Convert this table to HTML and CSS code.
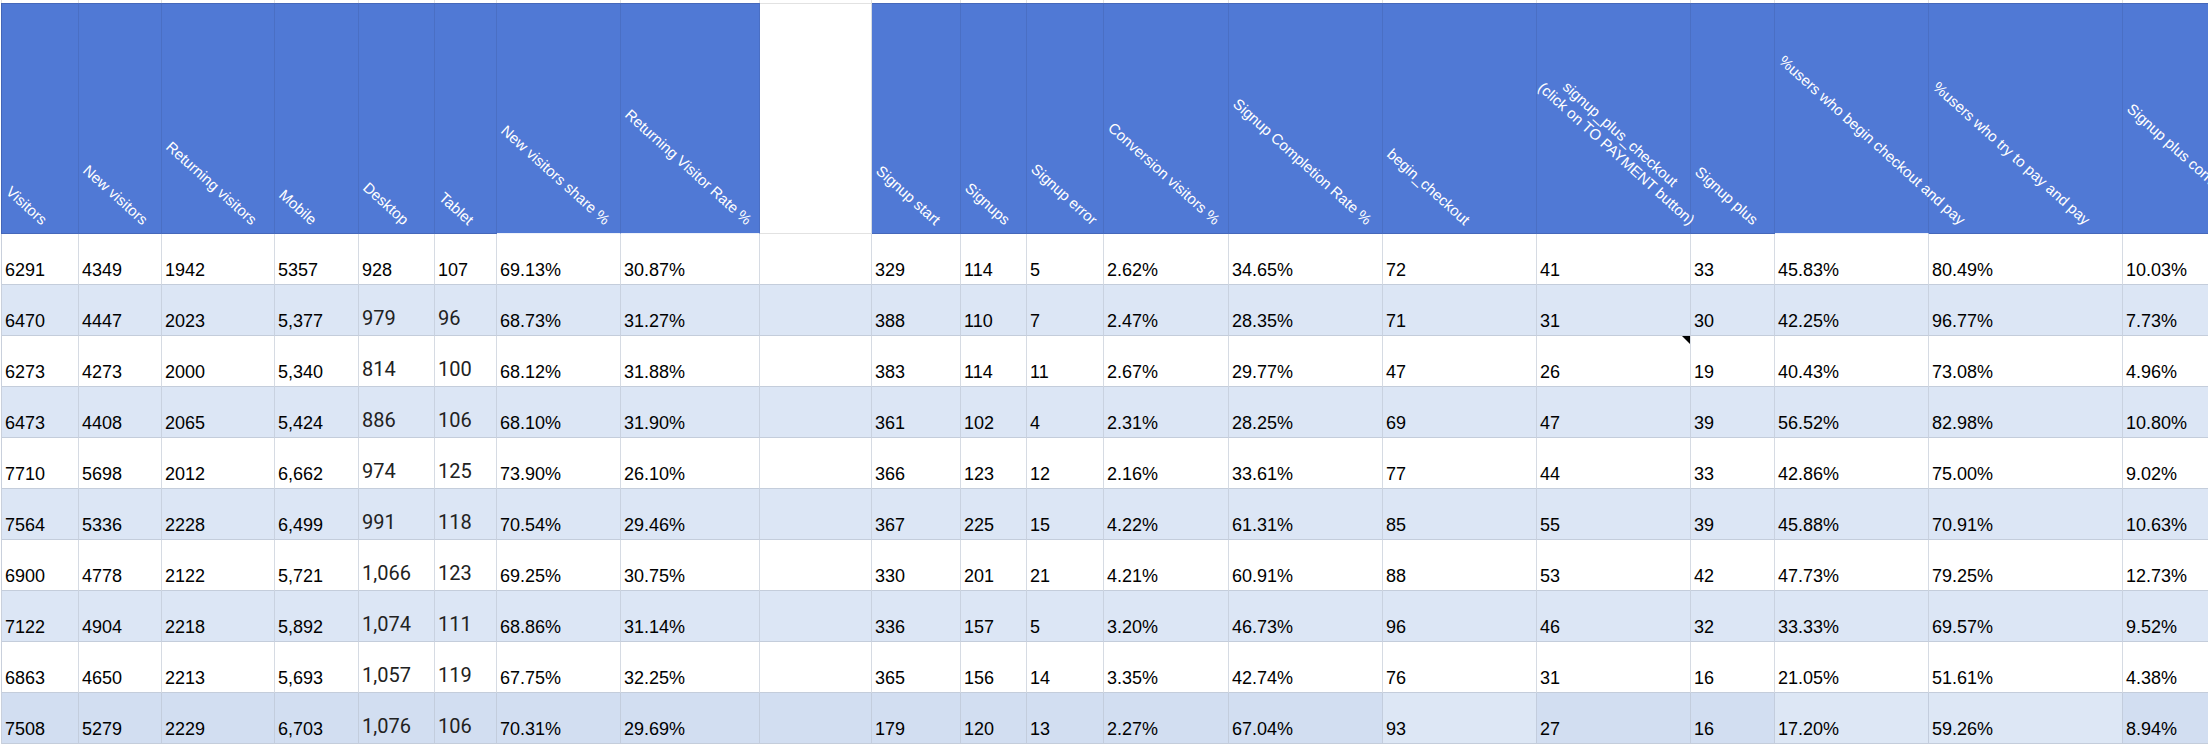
FILE: index.html
```html
<!DOCTYPE html>
<html lang="en">
<head>
<meta charset="utf-8">
<title>Funnel sheet</title>
<link rel="stylesheet" href="styles.css">
</head>
<body>
<div class="sheet">
  <div class="row top">
    <div class="c"></div><div class="c"></div><div class="c"></div><div class="c"></div><div class="c"></div><div class="c"></div><div class="c"></div><div class="c"></div><div class="c"></div><div class="c"></div><div class="c"></div><div class="c"></div><div class="c"></div><div class="c"></div><div class="c"></div><div class="c"></div><div class="c"></div><div class="c"></div><div class="c"></div><div class="c"></div>
  </div>
  <div class="row head">
    <div class="h"><span class="hl">Visitors</span></div>
    <div class="h"><span class="hl">New visitors</span></div>
    <div class="h"><span class="hl">Returning visitors</span></div>
    <div class="h"><span class="hl">Mobile</span></div>
    <div class="h"><span class="hl">Desktop</span></div>
    <div class="h"><span class="hl">Tablet</span></div>
    <div class="h lite"><span class="hl">New visitors share %</span></div>
    <div class="h lite"><span class="hl">Returning Visitor Rate %</span></div>
    <div class="h blank"></div>
    <div class="h"><span class="hl">Signup start</span></div>
    <div class="h"><span class="hl">Signups</span></div>
    <div class="h"><span class="hl">Signup error</span></div>
    <div class="h"><span class="hl">Conversion visitors %</span></div>
    <div class="h"><span class="hl">Signup Completion Rate %</span></div>
    <div class="h"><span class="hl">begin_checkout</span></div>
    <div class="h"><span class="hl two"><span class="l1">signup_plus_checkout</span><span class="l2">(click on TO PAYMENT button)</span></span></div>
    <div class="h"><span class="hl">Signup plus</span></div>
    <div class="h lite"><span class="hl">%users who begin checkout and pay</span></div>
    <div class="h"><span class="hl">%users who try to pay and pay</span></div>
    <div class="h"><span class="hl">Signup plus conversion %</span></div>
  </div>

  <div class="row">
    <div class="d">6291</div><div class="d">4349</div><div class="d">1942</div><div class="d">5357</div><div class="d">928</div><div class="d">107</div><div class="d">69.13%</div><div class="d">30.87%</div><div class="d"></div><div class="d">329</div><div class="d">114</div><div class="d">5</div><div class="d">2.62%</div><div class="d">34.65%</div><div class="d">72</div><div class="d">41</div><div class="d">33</div><div class="d">45.83%</div><div class="d">80.49%</div><div class="d">10.03%</div>
  </div>
  <div class="row alt">
    <div class="d">6470</div><div class="d">4447</div><div class="d">2023</div><div class="d">5,377</div><div class="d r">979</div><div class="d r">96</div><div class="d">68.73%</div><div class="d">31.27%</div><div class="d"></div><div class="d">388</div><div class="d">110</div><div class="d">7</div><div class="d">2.47%</div><div class="d">28.35%</div><div class="d">71</div><div class="d">31</div><div class="d">30</div><div class="d">42.25%</div><div class="d">96.77%</div><div class="d">7.73%</div>
  </div>
  <div class="row">
    <div class="d">6273</div><div class="d">4273</div><div class="d">2000</div><div class="d">5,340</div><div class="d r">814</div><div class="d r">100</div><div class="d">68.12%</div><div class="d">31.88%</div><div class="d"></div><div class="d">383</div><div class="d">114</div><div class="d">11</div><div class="d">2.67%</div><div class="d">29.77%</div><div class="d">47</div><div class="d note">26</div><div class="d">19</div><div class="d">40.43%</div><div class="d">73.08%</div><div class="d">4.96%</div>
  </div>
  <div class="row alt">
    <div class="d">6473</div><div class="d">4408</div><div class="d">2065</div><div class="d">5,424</div><div class="d r">886</div><div class="d r">106</div><div class="d">68.10%</div><div class="d">31.90%</div><div class="d"></div><div class="d">361</div><div class="d">102</div><div class="d">4</div><div class="d">2.31%</div><div class="d">28.25%</div><div class="d">69</div><div class="d">47</div><div class="d">39</div><div class="d">56.52%</div><div class="d">82.98%</div><div class="d">10.80%</div>
  </div>
  <div class="row">
    <div class="d">7710</div><div class="d">5698</div><div class="d">2012</div><div class="d">6,662</div><div class="d r">974</div><div class="d r">125</div><div class="d">73.90%</div><div class="d">26.10%</div><div class="d"></div><div class="d">366</div><div class="d">123</div><div class="d">12</div><div class="d">2.16%</div><div class="d">33.61%</div><div class="d">77</div><div class="d">44</div><div class="d">33</div><div class="d">42.86%</div><div class="d">75.00%</div><div class="d">9.02%</div>
  </div>
  <div class="row alt">
    <div class="d">7564</div><div class="d">5336</div><div class="d">2228</div><div class="d">6,499</div><div class="d r">991</div><div class="d r">118</div><div class="d">70.54%</div><div class="d">29.46%</div><div class="d"></div><div class="d">367</div><div class="d">225</div><div class="d">15</div><div class="d">4.22%</div><div class="d">61.31%</div><div class="d">85</div><div class="d">55</div><div class="d">39</div><div class="d">45.88%</div><div class="d">70.91%</div><div class="d">10.63%</div>
  </div>
  <div class="row">
    <div class="d">6900</div><div class="d">4778</div><div class="d">2122</div><div class="d">5,721</div><div class="d r">1,066</div><div class="d r">123</div><div class="d">69.25%</div><div class="d">30.75%</div><div class="d"></div><div class="d">330</div><div class="d">201</div><div class="d">21</div><div class="d">4.21%</div><div class="d">60.91%</div><div class="d">88</div><div class="d">53</div><div class="d">42</div><div class="d">47.73%</div><div class="d">79.25%</div><div class="d">12.73%</div>
  </div>
  <div class="row alt">
    <div class="d">7122</div><div class="d">4904</div><div class="d">2218</div><div class="d">5,892</div><div class="d r">1,074</div><div class="d r">111</div><div class="d">68.86%</div><div class="d">31.14%</div><div class="d"></div><div class="d">336</div><div class="d">157</div><div class="d">5</div><div class="d">3.20%</div><div class="d">46.73%</div><div class="d">96</div><div class="d">46</div><div class="d">32</div><div class="d">33.33%</div><div class="d">69.57%</div><div class="d">9.52%</div>
  </div>
  <div class="row">
    <div class="d">6863</div><div class="d">4650</div><div class="d">2213</div><div class="d">5,693</div><div class="d r">1,057</div><div class="d r">119</div><div class="d">67.75%</div><div class="d">32.25%</div><div class="d"></div><div class="d">365</div><div class="d">156</div><div class="d">14</div><div class="d">3.35%</div><div class="d">42.74%</div><div class="d">76</div><div class="d">31</div><div class="d">16</div><div class="d">21.05%</div><div class="d">51.61%</div><div class="d">4.38%</div>
  </div>
  <div class="row last">
    <div class="d">7508</div><div class="d">5279</div><div class="d">2229</div><div class="d">6,703</div><div class="d r">1,076</div><div class="d r">106</div><div class="d">70.31%</div><div class="d">29.69%</div><div class="d"></div><div class="d">179</div><div class="d">120</div><div class="d">13</div><div class="d">2.27%</div><div class="d">67.04%</div><div class="d light">93</div><div class="d">27</div><div class="d">16</div><div class="d light">17.20%</div><div class="d light">59.26%</div><div class="d">8.94%</div>
  </div>
</div>
</body>
</html>
```
FILE: styles.css
```css
* { box-sizing: border-box; }

html, body {
  margin: 0;
  padding: 0;
  background: #ffffff;
  width: 2208px;
  height: 744px;
  overflow: hidden;
}

.sheet {
  padding-left: 1px;
  font-family: "Liberation Sans", Arial, sans-serif;
}

.row {
  display: grid;
  grid-template-columns: 77px 83px 113px 84px 76px 62px 124px 139px 112px 89px 66px 77px 125px 154px 154px 154px 84px 154px 194px 160px;
  height: 51px;
  border-left: 1px solid #c9d0dc;
}

.row.top {
  height: 3px;
  border-left-color: #e2e2e2;
}

.row.top .c {
  border-right: 1px solid #e2e2e2;
}

.row.head {
  height: 231px;
  border-left-color: #4466b6;
}

.h {
  position: relative;
  background: #5079d5;
  border-top: 1px solid #4668ba;
  border-bottom: 1px solid #4668ba;
  border-right: 1px solid #4a6fc4;
}

.h.lite {
  border-bottom-color: #eef2fa;
}

.h.blank {
  background: #ffffff;
  border-top-color: #e2e2e2;
  border-bottom-color: #e2e2e2;
  border-right-color: #d6dbe3;
}

.hl {
  position: absolute;
  z-index: 2;
  left: 1px;
  bottom: 5px;
  white-space: nowrap;
  font-family: "Liberation Sans", Arial, sans-serif;
  font-size: 15px;
  line-height: 17px;
  color: #ffffff;
  transform-origin: 0 100%;
  transform: translateX(74.31%) rotate(42deg) translateX(-100%);
}

.hl.two {
  display: block;
  left: -2px;
}

.hl .l1,
.hl .l2 {
  display: block;
}

.hl .l1 {
  padding-left: 18px;
}

.d {
  position: relative;
  display: flex;
  align-items: flex-end;
  padding: 0 3px 4px 3px;
  border-right: 1px solid #d6dbe3;
  border-bottom: 1px solid #c4cddb;
  font-size: 18px;
  line-height: 20px;
  color: #000000;
  white-space: nowrap;
  overflow: hidden;
}

.d.r {
  font-family: Roboto, "Liberation Sans", sans-serif;
  font-size: 20px;
  line-height: 20px;
  padding-bottom: 7px;
  color: #222222;
}

.row.alt .d {
  background: #dce6f5;
  border-right-color: #c9d2e0;
}

.row.last .d {
  background: #d2def1;
  border-right-color: #c3cddd;
}

.row.last .d.light {
  background: #dde7f5;
}

.d.note::after {
  content: "";
  position: absolute;
  top: 0;
  right: 0;
  width: 0;
  height: 0;
  border-top: 8px solid #000000;
  border-left: 8px solid transparent;
}
```
